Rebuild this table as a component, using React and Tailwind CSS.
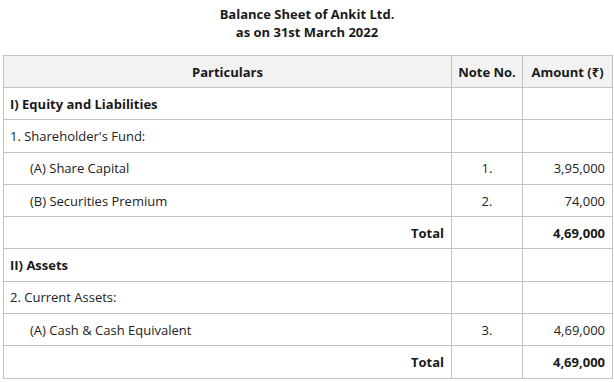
import React from "react";

const rows = [
  { label: "I) Equity and Liabilities", bold: true },
  { label: "1. Shareholder's Fund:" },
  { label: "(A) Share Capital", indent: true, note: "1.", amount: "3,95,000" },
  { label: "(B) Securities Premium", indent: true, note: "2.", amount: "74,000" },
  { label: "Total", total: true, amount: "4,69,000" },
  { label: "II) Assets", bold: true },
  { label: "2. Current Assets:" },
  { label: "(A) Cash & Cash Equivalent", indent: true, note: "3.", amount: "4,69,000" },
  { label: "Total", total: true, amount: "4,69,000" },
];

const App = () => {
  return (
    <div
      className="w-[614px] h-[382px] bg-white text-[13px] leading-[18px] text-[#222]"
      style={{ fontFamily: '"Open Sans", "Noto Sans", sans-serif' }}
    >
      <div className="pt-[5px] text-center font-bold text-[#1a1a1a]">
        <p>Balance Sheet of Ankit Ltd.</p>
        <p>as on 31st March 2022</p>
      </div>

      <table className="ml-[3px] mt-[14px] w-[609px] border-collapse table-fixed">
        <colgroup>
          <col className="w-[448px]" />
          <col className="w-[71px]" />
          <col className="w-[90px]" />
        </colgroup>
        <thead>
          <tr className="bg-[#f2f2f2] h-[32px]">
            <th className="border border-[#c2c2c2] font-bold text-center text-[#1a1a1a]">Particulars</th>
            <th className="border border-[#c2c2c2] font-bold text-center text-[#1a1a1a]">Note No.</th>
            <th className="border border-[#c2c2c2] font-bold text-center text-[#1a1a1a] whitespace-nowrap">Amount (₹)</th>
          </tr>
        </thead>
        <tbody>
          {rows.map((row, i) => (
            <tr key={i} className="h-[32.3px]">
              <td
                className={`border border-[#c2c2c2] px-[6px] ${
                  row.total ? "text-right font-bold pr-[7px] text-[#1a1a1a]" : ""
                } ${row.bold ? "font-bold text-[#1a1a1a]" : ""} ${row.indent ? "pl-[26px]" : ""}`}
              >
                {row.label}
              </td>
              <td className="border border-[#c2c2c2] text-center">{row.note}</td>
              <td
                className={`border border-[#c2c2c2] text-right pr-[7px] ${
                  row.total ? "font-bold text-[#1a1a1a]" : ""
                }`}
              >
                {row.amount}
              </td>
            </tr>
          ))}
        </tbody>
      </table>
    </div>
  );
};

export default App;
